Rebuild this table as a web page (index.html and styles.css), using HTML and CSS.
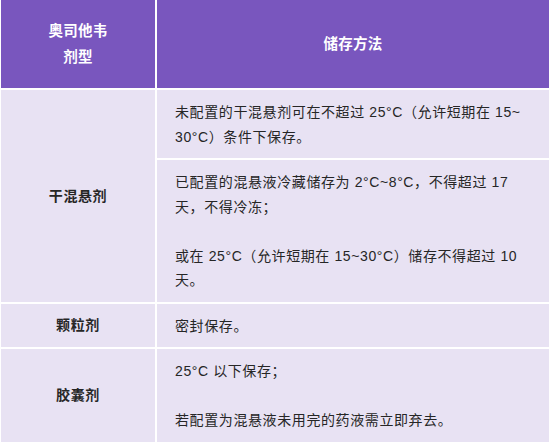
FILE: index.html
```html
<!DOCTYPE html>
<html lang="zh-CN">
<head>
<meta charset="utf-8">
<link rel="stylesheet" href="styles.css">
</head>
<body>
<div class="table">
  <div class="cell head">奥司他韦<br>剂型</div>
  <div class="cell head">储存方法</div>

  <div class="cell name span2">干混悬剂</div>
  <div class="cell text"><p>未配置的干混悬剂可在不超过 25°C（允许短期在 15~<wbr>30°C）条件下保存。</p></div>
  <div class="cell text"><p>已配置的混悬液冷藏储存为 2°C~8°C，不得超过 17 天，不得冷冻；</p><p class="blank"></p><p>或在 25°C（允许短期在 15~30°C）储存不得超过 10 天。</p></div>

  <div class="cell name">颗粒剂</div>
  <div class="cell text"><p>密封保存。</p></div>

  <div class="cell name">胶囊剂</div>
  <div class="cell text"><p>25°C 以下保存；</p><p class="blank"></p><p>若配置为混悬液未用完的药液需立即弃去。</p></div>
</div>
</body>
</html>
```

FILE: styles.css
```css
html, body {
  margin: 0;
  padding: 0;
  background: #ffffff;
}

body {
  font-family: "Liberation Sans", "Noto Sans CJK SC", sans-serif;
  color: #262626;
}

.table {
  display: grid;
  grid-template-columns: 154px 392px;
  column-gap: 2px;
  row-gap: 2px;
  padding: 0 2px 0 1px;
  width: 548px;
}

.cell {
  background: #e8e2f3;
  font-size: 14px;
  letter-spacing: 0.6px;
  line-height: 24.5px;
}

.head {
  background: #7956be;
  color: #ffffff;
  font-weight: bold;
  height: 88px;
  display: flex;
  align-items: center;
  justify-content: center;
  text-align: center;
  line-height: 26px;
  font-size: 14.5px;
  letter-spacing: 0.3px;
}

.name {
  font-weight: bold;
  display: flex;
  align-items: center;
  justify-content: center;
  text-align: center;
}

.span2 {
  grid-row: span 2;
}

.text {
  padding: 10px 18px 9px 18px;
}

.text p {
  margin: 0;
}

.text p.blank {
  height: 24.5px;
}
```
